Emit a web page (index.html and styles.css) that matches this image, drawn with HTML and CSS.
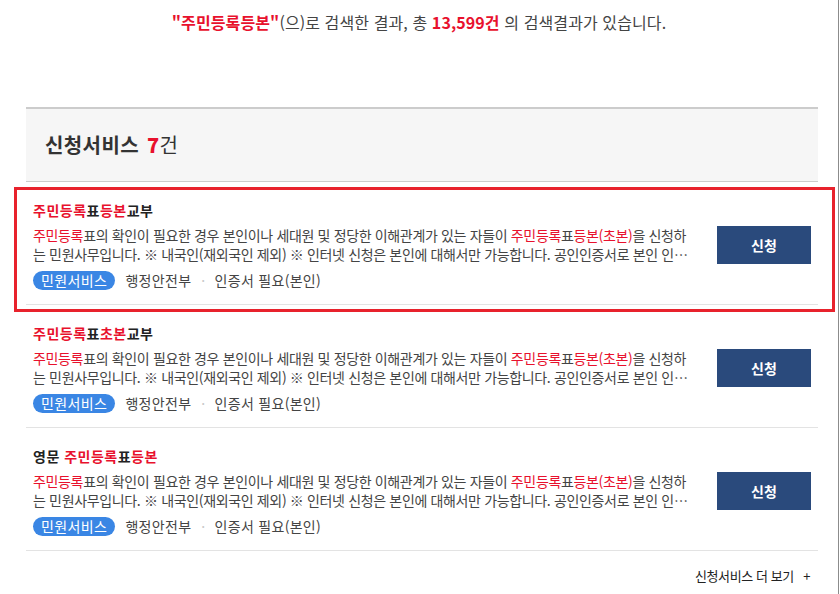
FILE: index.html
```html
<!DOCTYPE html>
<html lang="ko">
<head>
    <meta charset="UTF-8">
    <meta name="viewport" content="width=device-width, initial-scale=1.0">
    <title>통합검색 결과</title>
    <link rel="stylesheet" href="styles.css">
</head>
<body>

    <div class="page">
        <p class="summary">
            <strong class="hl">"주민등록등본"</strong>(으)로 검색한 결과, 총 <strong class="hl">13,599건</strong> 의 검색결과가 있습니다.
        </p>

        <!-- 신청서비스 -->
        <div class="result">
            <h2 class="result-head">신청서비스 <strong class="hl">7</strong><span class="count">건</span></h2>

            <ul class="result-list">
                <li class="item selected">
                    <div class="info">
                        <p class="title"><span class="hl">주민등록</span>표<span class="hl">등본</span>교부</p>
                        <p class="desc"><span class="hl">주민등록</span>표의 확인이 필요한 경우 본인이나 세대원 및 정당한 이해관계가 있는 자들이 <span class="hl">주민등록</span>표<span class="hl">등본(초본)</span>을 신청하는 민원사무입니다. ※ 내국인(재외국인 제외) ※ 인터넷 신청은 본인에 대해서만 가능합니다. 공인인증서로 본인 인증을 하셔야 합니다.</p>
                        <div class="tags">
                            <span class="badge">민원서비스</span>
                            <span class="tag">행정안전부</span>
                            <span class="tag">인증서 필요(본인)</span>
                        </div>
                    </div>
                    <a class="btn" href="#">신청</a>
                </li>
                <li class="item">
                    <div class="info">
                        <p class="title"><span class="hl">주민등록</span>표<span class="hl">초본</span>교부</p>
                        <p class="desc"><span class="hl">주민등록</span>표의 확인이 필요한 경우 본인이나 세대원 및 정당한 이해관계가 있는 자들이 <span class="hl">주민등록</span>표<span class="hl">등본(초본)</span>을 신청하는 민원사무입니다. ※ 내국인(재외국인 제외) ※ 인터넷 신청은 본인에 대해서만 가능합니다. 공인인증서로 본인 인증을 하셔야 합니다.</p>
                        <div class="tags">
                            <span class="badge">민원서비스</span>
                            <span class="tag">행정안전부</span>
                            <span class="tag">인증서 필요(본인)</span>
                        </div>
                    </div>
                    <a class="btn" href="#">신청</a>
                </li>
                <li class="item">
                    <div class="info">
                        <p class="title">영문 <span class="hl">주민등록</span>표<span class="hl">등본</span></p>
                        <p class="desc"><span class="hl">주민등록</span>표의 확인이 필요한 경우 본인이나 세대원 및 정당한 이해관계가 있는 자들이 <span class="hl">주민등록</span>표<span class="hl">등본(초본)</span>을 신청하는 민원사무입니다. ※ 내국인(재외국인 제외) ※ 인터넷 신청은 본인에 대해서만 가능합니다. 공인인증서로 본인 인증을 하셔야 합니다.</p>
                        <div class="tags">
                            <span class="badge">민원서비스</span>
                            <span class="tag">행정안전부</span>
                            <span class="tag">인증서 필요(본인)</span>
                        </div>
                    </div>
                    <a class="btn" href="#">신청</a>
                </li>
            </ul>

            <div class="more">
                <a href="#">신청서비스 더 보기 <span class="plus">+</span></a>
            </div>
        </div>
    </div>

</body>
</html>
```

FILE: styles.css
```css
body {
    font-family: "Noto Sans CJK KR", "Noto Sans", sans-serif;
    color: #444;
    background-color: #fff;
    margin: 0;
    padding: 0;
}
p, h2, ul {
    margin: 0;
    padding: 0;
}
ul {
    list-style: none;
}
a {
    color: inherit;
    text-decoration: none;
}
.page {
    width: 838px;
    min-height: 594px;
    border-right: 1px solid #8c8c8c;
    overflow: hidden;
}
.hl {
    color: #e8112d;
}
.summary {
    margin-top: 12px;
    font-size: 16px;
    line-height: 20px;
    text-align: center;
    color: #444;
    letter-spacing: 0.1px;
}
.summary strong {
    font-weight: bold;
}
.result {
    margin: 75px 0 0 26px;
    width: 792px;
}
.result-head {
    height: 72px;
    line-height: 72px;
    padding-left: 19px;
    background-color: #f6f6f6;
    border-top: 2px solid #cccccc;
    border-bottom: 1px solid #cccccc;
    font-size: 20px;
    font-weight: bold;
    color: #333;
    letter-spacing: 0.4px;
}
.result-head strong {
    margin-left: 2px;
}
.result-head .count {
    font-weight: normal;
}
.item {
    position: relative;
    display: flex;
    align-items: center;
    padding: 18px 7px 14px 7px;
    border-bottom: 1px solid #e3e3e3;
}
.selected::after {
    content: "";
    position: absolute;
    left: -12px;
    right: -17px;
    top: 5px;
    bottom: -8px;
    border: 3px solid #e8222c;
}
.info {
    width: 658px;
}
.title {
    font-size: 14px;
    line-height: 20px;
    font-weight: bold;
    color: #222;
    letter-spacing: 0.5px;
}
.desc {
    margin-top: 6px;
    font-size: 14px;
    line-height: 19px;
    letter-spacing: -0.35px;
    display: -webkit-box;
    -webkit-box-orient: vertical;
    -webkit-line-clamp: 2;
    overflow: hidden;
}
.tags {
    margin-top: 6px;
    display: flex;
    align-items: center;
    font-size: 14px;
    line-height: 20px;
    letter-spacing: 0.3px;
}
.badge {
    background-color: #3a86e4;
    color: #fff;
    border-radius: 10px;
    padding: 0 8px;
    height: 19px;
    line-height: 19px;
    letter-spacing: 0.4px;
    margin-right: 10px;
}
.tag + .tag::before {
    content: "·";
    color: #c8c8c8;
    margin: 0 9px 0 10px;
}
.btn {
    margin-left: auto;
    width: 94px;
    height: 38px;
    line-height: 38px;
    text-align: center;
    background-color: #2a4a7c;
    color: #fff;
    font-size: 14px;
    font-weight: bold;
}
.more {
    text-align: right;
    padding: 15px 8px 0 0;
    font-size: 13px;
    line-height: 20px;
    color: #222;
    letter-spacing: -0.4px;
}
.plus {
    margin-left: 6px;
}
```
